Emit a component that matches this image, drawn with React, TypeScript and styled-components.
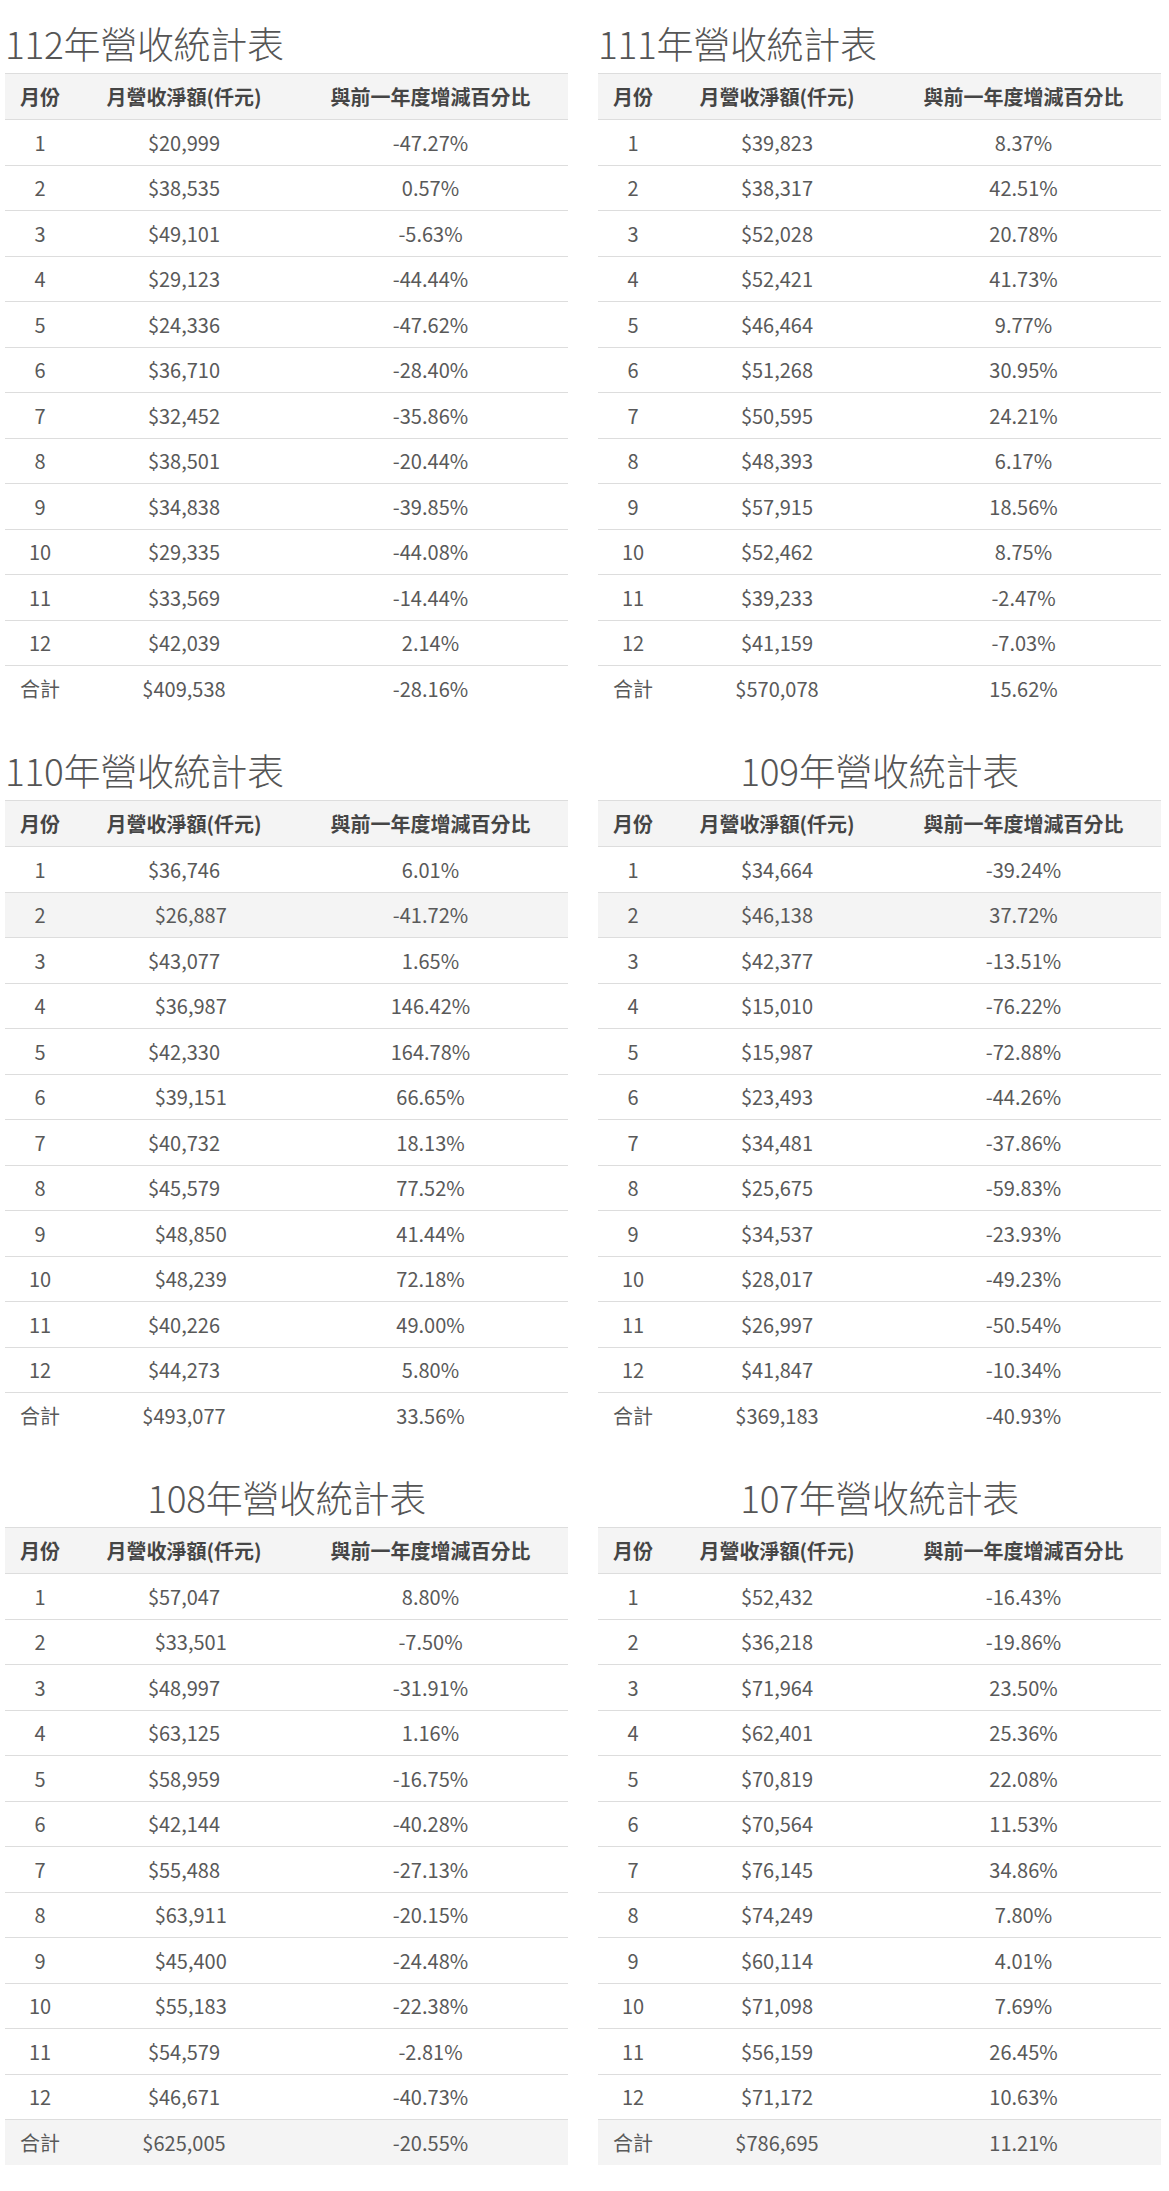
import React from 'react';
import styled, { createGlobalStyle } from 'styled-components';

const GlobalStyle = createGlobalStyle`
  body {
    margin: 0;
    background: #fff;
    font-family: "Noto Sans CJK TC", "Noto Sans", sans-serif;
    color: #555;
  }
`;

const Page = styled.div`
  display: grid;
  grid-template-columns: 563px 563px;
  column-gap: 30px;
  row-gap: 38px;
  padding: 22px 8px 24px 5px;
`;

const Block = styled.section`
  display: flex;
  flex-direction: column;
`;

const Title = styled.h2<{ $center?: boolean }>`
  margin: 0 0 8px;
  font-size: 37px;
  line-height: 43px;
  font-weight: 300;
  color: #555;
  text-align: ${(p) => (p.$center ? 'center' : 'left')};
  letter-spacing: -0.3px;
`;

const Table = styled.table`
  width: 563px;
  border-collapse: collapse;
  table-layout: fixed;
  font-size: 20px;
`;

const HeadRow = styled.tr`
  background: #f4f4f4;
  border-top: 1px solid #ddd;
  border-bottom: 1px solid #ddd;
  height: 46px;
`;

const Th = styled.th`
  padding: 0;
  font-size: 20px;
  font-weight: 700;
  color: #454545;
  text-align: center;
  vertical-align: middle;
`;

const Row = styled.tr<{ $shaded?: boolean }>`
  height: 45.5px;
  background: ${(p) => (p.$shaded ? '#f4f4f4' : 'transparent')};
  & + & {
    border-top: 1px solid #ddd;
  }
`;

const Td = styled.td`
  padding: 0;
  text-align: center;
  vertical-align: middle;
  color: #595959;
  font-weight: 400;
  white-space: pre;
`;

type Line = [string, string];

type Sheet = {
  year: number;
  center?: boolean;
  rows: Line[];
  total: Line;
  shaded?: number; // index of a highlighted row, 12 = total
};

// leading spaces as in the source page
const sp = (s: string) => '\u00a0\u00a0\u00a0' + s;

const sheets: Sheet[] = [
  {
    year: 112,
    rows: [
      ['$20,999', '-47.27%'],
      ['$38,535', '0.57%'],
      ['$49,101', '-5.63%'],
      ['$29,123', '-44.44%'],
      ['$24,336', '-47.62%'],
      ['$36,710', '-28.40%'],
      ['$32,452', '-35.86%'],
      ['$38,501', '-20.44%'],
      ['$34,838', '-39.85%'],
      ['$29,335', '-44.08%'],
      ['$33,569', '-14.44%'],
      ['$42,039', '2.14%'],
    ],
    total: ['$409,538', '-28.16%'],
  },
  {
    year: 111,
    rows: [
      ['$39,823', '8.37%'],
      ['$38,317', '42.51%'],
      ['$52,028', '20.78%'],
      ['$52,421', '41.73%'],
      ['$46,464', '9.77%'],
      ['$51,268', '30.95%'],
      ['$50,595', '24.21%'],
      ['$48,393', '6.17%'],
      ['$57,915', '18.56%'],
      ['$52,462', '8.75%'],
      ['$39,233', '-2.47%'],
      ['$41,159', '-7.03%'],
    ],
    total: ['$570,078', '15.62%'],
  },
  {
    year: 110,
    shaded: 1,
    rows: [
      ['$36,746', '6.01%'],
      [sp('$26,887'), '-41.72%'],
      ['$43,077', '1.65%'],
      [sp('$36,987'), '146.42%'],
      ['$42,330', '164.78%'],
      [sp('$39,151'), '66.65%'],
      ['$40,732', '18.13%'],
      ['$45,579', '77.52%'],
      [sp('$48,850'), '41.44%'],
      [sp('$48,239'), '72.18%'],
      ['$40,226', '49.00%'],
      ['$44,273', '5.80%'],
    ],
    total: ['$493,077', '33.56%'],
  },
  {
    year: 109,
    center: true,
    shaded: 1,
    rows: [
      ['$34,664', '-39.24%'],
      ['$46,138', '37.72%'],
      ['$42,377', '-13.51%'],
      ['$15,010', '-76.22%'],
      ['$15,987', '-72.88%'],
      ['$23,493', '-44.26%'],
      ['$34,481', '-37.86%'],
      ['$25,675', '-59.83%'],
      ['$34,537', '-23.93%'],
      ['$28,017', '-49.23%'],
      ['$26,997', '-50.54%'],
      ['$41,847', '-10.34%'],
    ],
    total: ['$369,183', '-40.93%'],
  },
  {
    year: 108,
    center: true,
    shaded: 12,
    rows: [
      ['$57,047', '8.80%'],
      [sp('$33,501'), '-7.50%'],
      ['$48,997', '-31.91%'],
      ['$63,125', '1.16%'],
      ['$58,959', '-16.75%'],
      ['$42,144', '-40.28%'],
      ['$55,488', '-27.13%'],
      [sp('$63,911'), '-20.15%'],
      [sp('$45,400'), '-24.48%'],
      [sp('$55,183'), '-22.38%'],
      ['$54,579', '-2.81%'],
      ['$46,671', '-40.73%'],
    ],
    total: ['$625,005', '-20.55%'],
  },
  {
    year: 107,
    center: true,
    shaded: 12,
    rows: [
      ['$52,432', '-16.43%'],
      ['$36,218', '-19.86%'],
      ['$71,964', '23.50%'],
      ['$62,401', '25.36%'],
      ['$70,819', '22.08%'],
      ['$70,564', '11.53%'],
      ['$76,145', '34.86%'],
      ['$74,249', '7.80%'],
      ['$60,114', '4.01%'],
      ['$71,098', '7.69%'],
      ['$56,159', '26.45%'],
      ['$71,172', '10.63%'],
    ],
    total: ['$786,695', '11.21%'],
  },
];

function RevenueTable({ sheet }: { sheet: Sheet }) {
  return (
    <Block>
      <Title $center={sheet.center}>{sheet.year}年營收統計表</Title>
      <Table>
        <colgroup>
          <col style={{ width: 70 }} />
          <col style={{ width: 218 }} />
          <col style={{ width: 275 }} />
        </colgroup>
        <thead>
          <HeadRow>
            <Th>月份</Th>
            <Th>月營收淨額(仟元)</Th>
            <Th>與前一年度增減百分比</Th>
          </HeadRow>
        </thead>
        <tbody>
          {sheet.rows.map((r, i) => (
            <Row key={i} $shaded={sheet.shaded === i}>
              <Td>{i + 1}</Td>
              <Td>{r[0]}</Td>
              <Td>{r[1]}</Td>
            </Row>
          ))}
          <Row $shaded={sheet.shaded === 12}>
            <Td>合計</Td>
            <Td>{sheet.total[0]}</Td>
            <Td>{sheet.total[1]}</Td>
          </Row>
        </tbody>
      </Table>
    </Block>
  );
}

export default function App() {
  return (
    <>
      <GlobalStyle />
      <Page>
        {sheets.map((s) => (
          <RevenueTable key={s.year} sheet={s} />
        ))}
      </Page>
    </>
  );
}
